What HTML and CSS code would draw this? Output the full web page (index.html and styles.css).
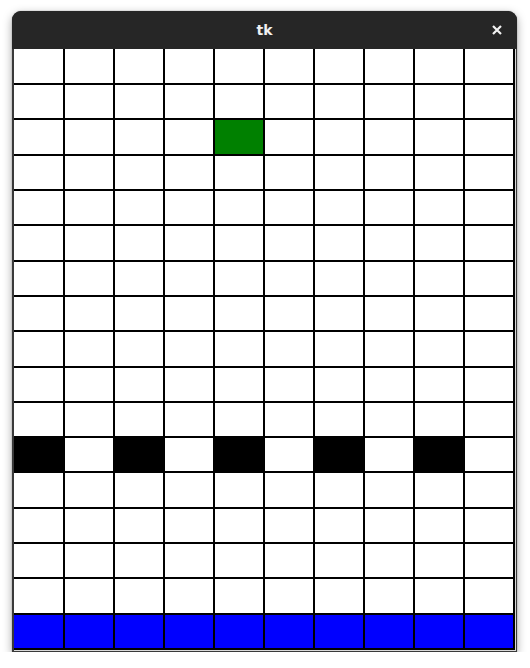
FILE: index.html
```html
<!DOCTYPE html>
<html>
<head>
<meta charset="utf-8">
<link rel="stylesheet" href="styles.css">
</head>
<body>
<div class="window">
  <div class="titlebar">
    <span class="title">tk</span>
    <svg class="close" width="10" height="10" viewBox="0 0 10 10"><path d="M1 1 L9 9 M9 1 L1 9" stroke="#f2f2f2" stroke-width="2.2" stroke-linecap="butt"/></svg>
  </div>
  <div class="frame">
    <div class="canvas" id="grid"></div>
  </div>
</div>
<script src="script.js"></script>
</body>
</html>
```
FILE: script.js
```js
const grid = document.getElementById('grid');
for (let r = 0; r < 17; r++) {
  for (let c = 0; c < 10; c++) {
    const d = document.createElement('div');
    d.className = 'cell';
    if (r === 2 && c === 4) d.classList.add('green');
    if (r === 11 && c % 2 === 0) d.classList.add('black');
    if (r === 16) d.classList.add('blue');
    grid.appendChild(d);
  }
}
```
FILE: styles.css
```css
html, body {
  margin: 0;
  padding: 0;
  background: #ffffff;
}
body {
  padding: 11px 0 0 12px;
}
.window {
  width: 505px;
  border-radius: 9px 9px 0 0;
  box-shadow: 0 3px 10px rgba(0, 0, 0, 0.35), 0 0 0 1px rgba(0,0,0,0.06);
  background: #2a2a2a;
}
.titlebar {
  height: 38px;
  background: #262626;
  border-radius: 9px 9px 0 0;
  display: flex;
  align-items: center;
  justify-content: center;
  position: relative;
}
.title {
  color: #f0f0f0;
  font-family: "DejaVu Sans", "Noto Sans", sans-serif;
  font-weight: bold;
  font-size: 14px;
  margin-top: 0px;
}
.close {
  position: absolute;
  right: 15px;
  top: 14px;
}
.frame {
  display: flex;
  border-left: 2px solid #3a3a3a;
  border-right: 1px solid #3a3a3a;
  border-bottom: 1px solid #3a3a3a;
  background: #d8d8d8;
  padding: 0 1px 1px 0;
}
.canvas {
  width: 501px;
  height: 601px;
  box-sizing: border-box;
  background: #000;
  padding: 0 2px 2px 0;
  display: grid;
  grid-template-columns: 49px repeat(9, 48px);
  grid-template-rows: 34px repeat(16, 1fr);
  gap: 2px;
}
.cell {
  background: #ffffff;
}
.cell.green { background: #008000; }
.cell.black { background: #000000; }
.cell.blue { background: #0000ff; }
```
